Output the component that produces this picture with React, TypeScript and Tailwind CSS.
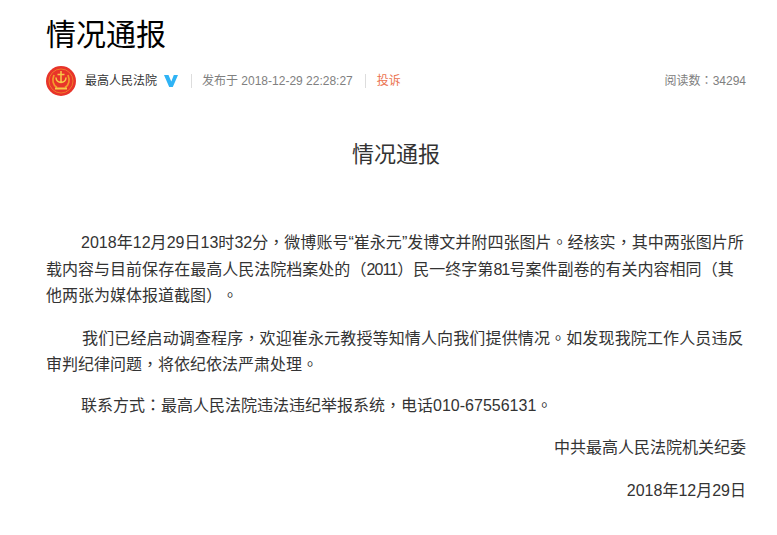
const P = ({ c }: { c: string }) => <span className="leading-none font-['Noto_Sans_CJK_TC',sans-serif]">{c}</span>
const D = ({ c }: { c: string }) => <span className="tracking-[-0.9px]">{c}</span>

export default function App() {
  return (
    <div className="min-h-[535px] w-[777px] bg-white pl-[46px] pr-[31px] text-[#333] [text-spacing-trim:space-all] font-['Liberation_Sans','Noto_Sans_CJK_SC',sans-serif]">
      <h1 className="pt-[14px] text-[30px] leading-[42px] text-black">情况通报</h1>

      <div className="mt-[9px] flex h-[32px] items-center text-[12px]">
        <svg width="30" height="30" viewBox="0 0 30 30" className="mr-[9px] shrink-0">
          <circle cx="15" cy="15" r="15" fill="#e8342a" />
          <path d="M15 5v12M11.500 8.500h7M10 11.500c0 6.500 10 6.500 10 0" fill="none" stroke="#f7c948" strokeWidth="1.500" />
          <path d="M8 9c-2 5-1 10 3 12.500M22 9c2 5 1 10-3 12.500" fill="none" stroke="#f39c2d" strokeWidth="1.800" />
          <path d="M9 22.500h12" stroke="#f7c948" strokeWidth="2" />
          <circle cx="15" cy="15" r="12" fill="none" stroke="#f08a2c" strokeWidth="0.800" />
        </svg>
        <span className="text-[#333]">最高人民法院</span>
        <svg width="14" height="12" viewBox="0 0 14 12" className="ml-[7px] shrink-0">
          <path d="M0 0h4.500l2.800 6.500L9.800 0H14L8.800 12H5.200z" fill="#2fb3f5" />
        </svg>
        <div className="ml-[13px] h-[14px] w-px bg-[#ddd]" />
        <span className="ml-[10px] text-[#808080]">发布于 2018-12-29 22:28:27</span>
        <div className="ml-[12px] h-[14px] w-px bg-[#ddd]" />
        <span className="ml-[11px] text-[#eb7350]">投诉</span>
        <span className="ml-auto text-[#808080]">阅读数<P c="：" />34294</span>
      </div>

      <h2 className="mt-[41px] text-center text-[22px] leading-[34px] text-[#333]">情况通报</h2>

      <div className="mt-[58px] text-[16px] leading-[26.500px] text-[#333]">
        <p className="whitespace-nowrap">
          <span className="block indent-[35px] tracking-[0.03px]">
            2018年12月29日13时32分<P c="，" />微博账号“崔永元”发博文并附四张图片<P c="。" />经核实<P c="，" />其中两张图片所
          </span>
          <span className="block tracking-[0.02px]">
            载内容与目前保存在最高人民法院档案处的<P c="（" /><D c="2011" /><P c="）" />民一终字第<D c="81" />号案件副卷的有关内容相同<P c="（" />其
          </span>
          <span className="block">
            他两张为媒体报道截图<P c="）" /><P c="。" />
          </span>
        </p>
        <p className="mt-[16px] whitespace-nowrap">
          <span className="block indent-[36px] tracking-[0.14px]">
            我们已经启动调查程序<P c="，" />欢迎崔永元教授等知情人向我们提供情况<P c="。" />如发现我院工作人员违反
          </span>
          <span className="block">
            审判纪律问题<P c="，" />将依纪依法严肃处理<P c="。" />
          </span>
        </p>
        <p className="mt-[14px] indent-[35px]">联系方式<P c="：" />最高人民法院违法违纪举报系统<P c="，" />电话010-67556131<P c="。" /></p>
        <p className="mt-[16px] text-right">中共最高人民法院机关纪委</p>
        <p className="mt-[16px] text-right">2018年12月29日</p>
      </div>
    </div>
  )
}
